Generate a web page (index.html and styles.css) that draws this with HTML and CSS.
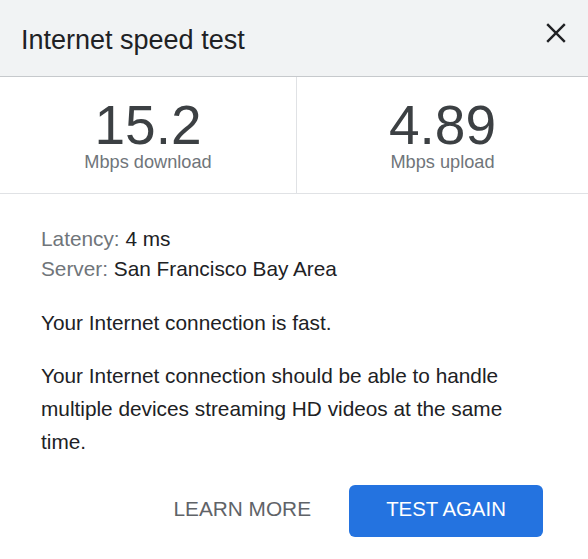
FILE: index.html
```html
<!DOCTYPE html>
<html lang="en">
<head>
<meta charset="utf-8">
<title>Internet speed test</title>
<link rel="stylesheet" href="styles.css">
</head>
<body>
<div class="dialog">
  <header class="header">
    <h1 class="title">Internet speed test</h1>
    <button class="close" aria-label="Close">
      <svg width="20" height="20" viewBox="0 0 20 20"><path d="M1.2 1.2 L18.8 18.8 M18.8 1.2 L1.2 18.8" stroke="#202124" stroke-width="2.4" fill="none"/></svg>
    </button>
  </header>
  <section class="stats">
    <div class="stat">
      <div class="value">15.2</div>
      <div class="unit">Mbps download</div>
    </div>
    <div class="stat">
      <div class="value">4.89</div>
      <div class="unit">Mbps upload</div>
    </div>
  </section>
  <section class="content">
    <div class="meta">
      <div class="meta-row"><span class="label">Latency:</span> 4 ms</div>
      <div class="meta-row"><span class="label">Server:</span> San Francisco Bay Area</div>
    </div>
    <p class="para first">Your Internet connection is fast.</p>
    <p class="para">Your Internet connection should be able to handle multiple devices streaming HD videos at the same time.</p>
    <div class="actions">
      <button class="btn-text">LEARN MORE</button>
      <button class="btn-primary">TEST AGAIN</button>
    </div>
  </section>
</div>
</body>
</html>
```
FILE: styles.css
```css
html, body {
  margin: 0;
  padding: 0;
  background: #ffffff;
}
body {
  font-family: "Liberation Sans", Arial, sans-serif;
  color: #202124;
}
.dialog {
  width: 588px;
}
.header {
  box-sizing: border-box;
  height: 77px;
  background: #f1f3f4;
  border-bottom: 1px solid #c6c9cc;
  display: flex;
  justify-content: space-between;
  align-items: flex-start;
  padding: 24px 22px 0 21px;
}
.title {
  margin: 0;
  font-size: 27px;
  line-height: 32px;
  font-weight: normal;
  color: #202124;
}
.close {
  margin: -1px 0 0 0;
  padding: 0;
  border: 0;
  background: transparent;
  width: 20px;
  height: 20px;
  display: block;
}
.close svg {
  display: block;
}
.stats {
  display: grid;
  grid-template-columns: 296px 1fr;
  border-bottom: 1px solid #e0e2e5;
}
.stat {
  display: flex;
  flex-direction: column;
  align-items: center;
  padding: 22px 0 21px;
}
.stat + .stat {
  border-left: 1px solid #e0e2e5;
}
.value {
  font-size: 55px;
  line-height: 53px;
  color: #3c4043;
}
.unit {
  font-size: 18.2px;
  line-height: 20px;
  color: #70757a;
}
.content {
  padding: 30px 41px 0 41px;
  font-size: 20.8px;
}
.meta-row {
  line-height: 30px;
  color: #202124;
}
.label {
  color: #70757a;
}
.para {
  margin: 20px 0 0 0;
  line-height: 33px;
  color: #202124;
}
.para.first {
  margin-top: 22px;
}
.actions {
  display: flex;
  justify-content: flex-end;
  align-items: center;
  gap: 22px;
  margin-top: 27px;
  padding-right: 4px;
}
.btn-text {
  font-family: inherit;
  font-size: 20.8px;
  line-height: 24px;
  padding: 12px 16px 16px;
  border: 0;
  background: transparent;
  color: #5f6368;
}
.btn-primary {
  font-family: inherit;
  font-size: 20.4px;
  line-height: 24px;
  height: 52px;
  box-sizing: border-box;
  width: 194px;
  padding: 12px 0 16px;
  border: 0;
  border-radius: 6px;
  background: #2473e0;
  color: #ffffff;
}
```
